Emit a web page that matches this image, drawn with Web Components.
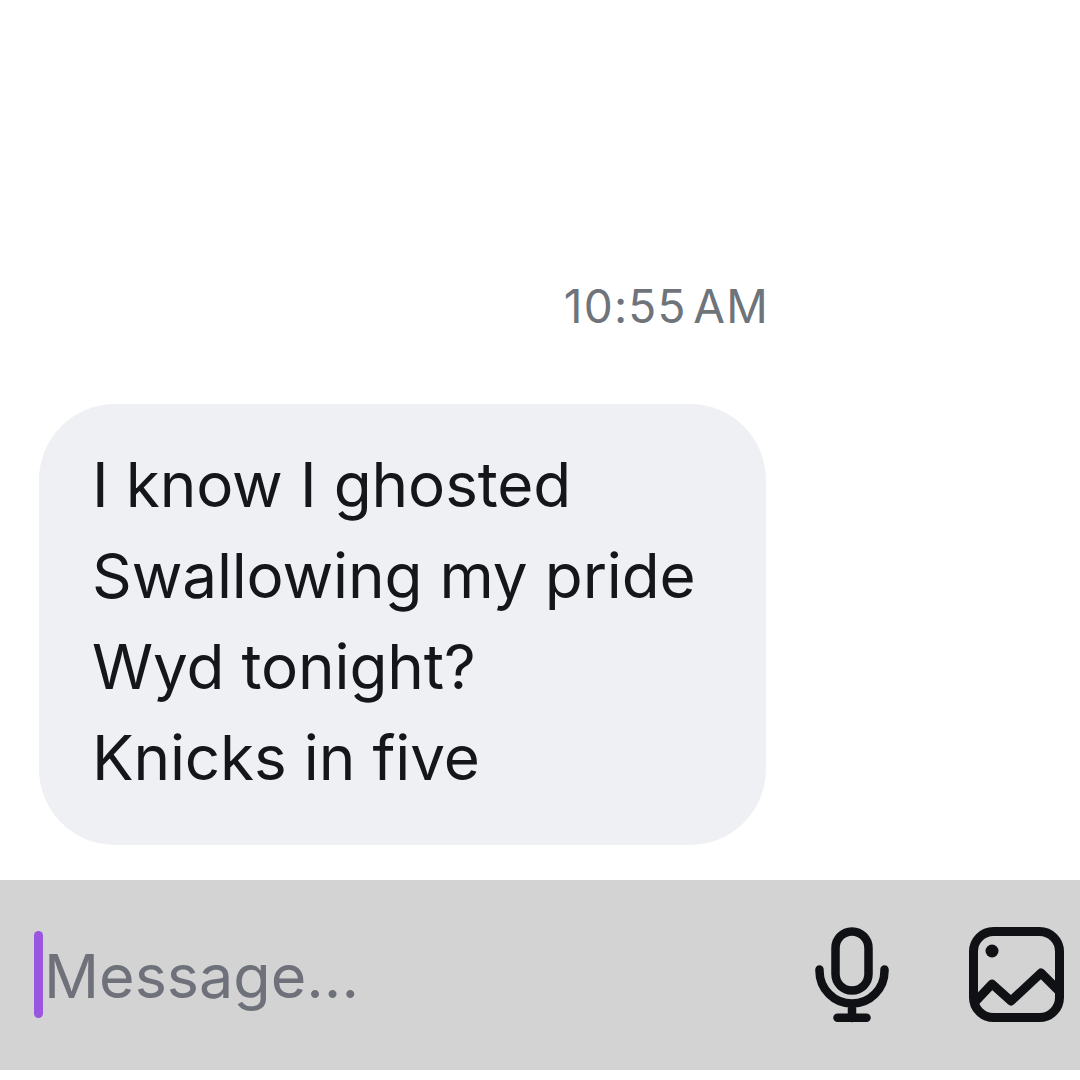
<!DOCTYPE html>
<html><head><meta charset="utf-8"><style>html,body{margin:0;background:#fff}body{font-family:Inter,"Liberation Sans",sans-serif}</style></head>
<body>
<chat-screen>
<chat-time slot="time">10:55 AM</chat-time>
<chat-bubble slot="bubble"><span>I know I ghosted</span><span>Swallowing my pride</span><span>Wyd tonight?</span><span>Knicks in five</span></chat-bubble>
<chat-composer slot="composer">Message...</chat-composer>
</chat-screen>
<template id="ts"><style>:host{display:flex;flex-direction:column;width:1080px;height:1080px;box-sizing:border-box;background:#fff;overflow:hidden}
.time{display:flex;justify-content:flex-end;padding:281px 311px 0 0}
.bubble{display:flex;padding:0 0 0 39px;margin-top:73px}
.composer{margin-top:35px}</style>
<div class="time"><slot name="time"></slot></div><div class="bubble"><slot name="bubble"></slot></div><div class="composer"><slot name="composer"></slot></div></template>
<script>
class Base extends HTMLElement{render(h){this.attachShadow({mode:'open'}).innerHTML=h}}
customElements.define('chat-screen',class extends Base{constructor(){super();this.attachShadow({mode:'open'}).append(document.getElementById('ts').content.cloneNode(true))}});
customElements.define('chat-time',class extends Base{constructor(){super();this.render(`<style>:host{display:block;font-size:46px;line-height:50px;color:#6f737a;letter-spacing:1.2px;word-spacing:-7.5px}</style><slot></slot>`)}});
customElements.define('chat-bubble',class extends Base{constructor(){super();this.render(`<style>:host{display:flex;flex-direction:column;box-sizing:border-box;width:727px;height:441px;padding:35px 0 0 53px;background:#eff0f4;border-radius:76px;font-size:62px;letter-spacing:-.15px;line-height:91px;color:#14161a}::slotted(span){display:block;white-space:nowrap}</style><slot></slot>`)}});
customElements.define('chat-composer',class extends Base{constructor(){super();this.render(`<style>:host{display:flex;align-items:center;box-sizing:border-box;width:1080px;height:190px;background:#d3d3d3;padding:0 15px 0 34px}
.caret{width:9px;height:87px;border-radius:5px;background:#9a56e0;flex:none;margin-top:-2px}
.text{flex:1;font-size:61px;line-height:70px;color:#6e717a;margin-left:1px;margin-top:2px}
svg{display:block;flex:none;margin-top:-1px}.mic{margin-right:80px}</style>
<div class="caret"></div><div class="text"><slot></slot></div>
<svg class="mic" width="74" height="96" viewBox="816 927 74 96" fill="none" stroke="#101114" stroke-width="8.5" stroke-linecap="round" stroke-linejoin="round"><rect x="836.5" y="931.5" width="33" height="59" rx="16.5"/><path d="M820.5 969.5v1.5a32.5 32.5 0 0 0 65 0v-1.5M853 1004v14M838.5 1017.800h29"/></svg>
<svg width="96" height="96" viewBox="970 927 96 96" fill="none" stroke="#101114" stroke-width="9" stroke-linejoin="round"><path d="M976 1002L993 984L1012 1001L1042 973L1060 991"/><rect x="974.500" y="931.500" width="86" height="86" rx="20"/><circle cx="993" cy="951" r="6.5" fill="#101114" stroke="none"/></svg>`)}});
</script>
</body></html>
